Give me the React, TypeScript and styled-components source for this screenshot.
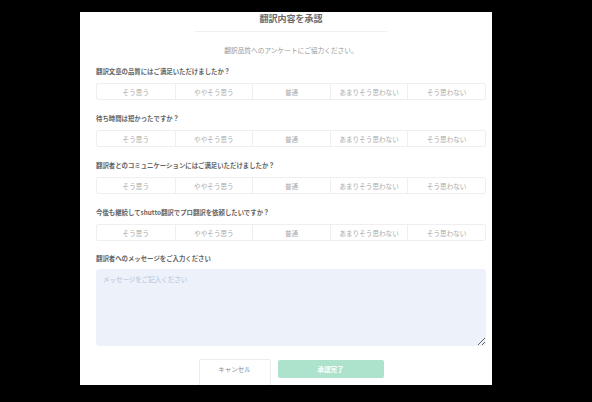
import React from "react";
import styled, { createGlobalStyle } from "styled-components";

const Global = createGlobalStyle`
  html, body { margin: 0; padding: 0; background: #000; }
  body { font-family: "Noto Sans CJK JP", "Noto Sans", sans-serif; }
  * { box-sizing: border-box; }
`;

const Page = styled.div`
  width: 592px;
  height: 402px;
  background: #000;
  padding: 12px 0 0 80px;
  overflow: hidden;
`;

const Clip = styled.div`
  width: 412px;
  height: 373px;
  background: #fff;
  overflow: hidden;
`;

const Modal = styled.div`
  width: 422px;
  padding: 1px 16px 0;
  display: flex;
  flex-direction: column;
`;

const Title = styled.h2`
  margin: 0;
  font-size: 9px;
  line-height: 12px;
  font-weight: 700;
  color: #6a6a6a;
  text-align: center;
`;

const Divider = styled.hr`
  width: 192px;
  margin: 6px auto 0;
  border: none;
  border-top: 1px solid #f0f0f0;
  height: 0;
`;

const Lead = styled.p`
  margin: 13px 0 0;
  font-size: 6.7px;
  line-height: 10px;
  color: #9a9a9a;
  text-align: center;
`;

const Block = styled.div<{ $first?: boolean }>`
  margin-top: ${(p) => (p.$first ? 12 : 14)}px;
  display: flex;
  flex-direction: column;
`;

const Question = styled.div`
  font-size: 6.4px;
  line-height: 10px;
  font-weight: 700;
  color: #646464;
  margin-bottom: 6px;
`;

const Options = styled.div`
  display: grid;
  grid-template-columns: repeat(5, 1fr);
  height: 17px;
  border: 1px solid #efefef;
  border-radius: 2px;
`;

const Option = styled.div`
  display: flex;
  align-items: center;
  justify-content: center;
  font-size: 6.6px;
  color: #aaa;
  & + & { border-left: 1px solid #efefef; }
`;

const MessageLabel = styled(Question)`
  margin-top: 13px;
  margin-bottom: 5px;
`;

const TextArea = styled.textarea`
  display: block;
  width: 390px;
  height: 77px;
  border: none;
  border-radius: 3px;
  background: #edf1f9;
  padding: 5px 7px;
  font-family: "Noto Sans CJK JP", "Noto Sans", sans-serif;
  font-size: 6.5px;
  line-height: 10px;
  color: #555;
  outline: none;
  &::placeholder { color: #b2c1d8; }
`;

const Actions = styled.div`
  display: flex;
  justify-content: center;
  align-items: flex-start;
  gap: 7px;
  margin-top: 13px;
`;

const Button = styled.button<{ $primary?: boolean }>`
  font-family: "Noto Sans CJK JP", "Noto Sans", sans-serif;
  font-size: 6.5px;
  border-radius: 2px;
  padding: 0;
  display: flex;
  align-items: center;
  justify-content: center;
  width: ${(p) => (p.$primary ? 106 : 72)}px;
  height: ${(p) => (p.$primary ? 18 : 34)}px;
  margin-top: ${(p) => (p.$primary ? 1 : 0)}px;
  background: ${(p) => (p.$primary ? "#ade3cc" : "#fff")};
  color: ${(p) => (p.$primary ? "#fff" : "#888")};
  border: ${(p) => (p.$primary ? "none" : "1px solid #ececec")};
  padding-bottom: ${(p) => (p.$primary ? 0 : 15)}px;
  font-weight: ${(p) => (p.$primary ? 700 : 400)};
`;

const choices = ["そう思う", "ややそう思う", "普通", "あまりそう思わない", "そう思わない"];
const questions = [
  "翻訳文章の品質にはご満足いただけましたか？",
  "待ち時間は短かったですか？",
  "翻訳者とのコミュニケーションにはご満足いただけましたか？",
  "今後も継続してshutto翻訳でプロ翻訳を依頼したいですか？",
];

export default function App() {
  return (
    <>
      <Global />
      <Page>
        <Clip>
          <Modal>
            <Title>翻訳内容を承認</Title>
            <Divider />
            <Lead>翻訳品質へのアンケートにご協力ください。</Lead>
            {questions.map((q, i) => (
              <Block key={q} $first={i === 0}>
                <Question>{q}</Question>
                <Options>
                  {choices.map((c) => (
                    <Option key={c}>{c}</Option>
                  ))}
                </Options>
              </Block>
            ))}
            <MessageLabel>翻訳者へのメッセージをご入力ください</MessageLabel>
            <TextArea placeholder="メッセージをご記入ください" />
            <Actions>
              <Button>キャンセル</Button>
              <Button $primary>承認完了</Button>
            </Actions>
          </Modal>
        </Clip>
      </Page>
    </>
  );
}
